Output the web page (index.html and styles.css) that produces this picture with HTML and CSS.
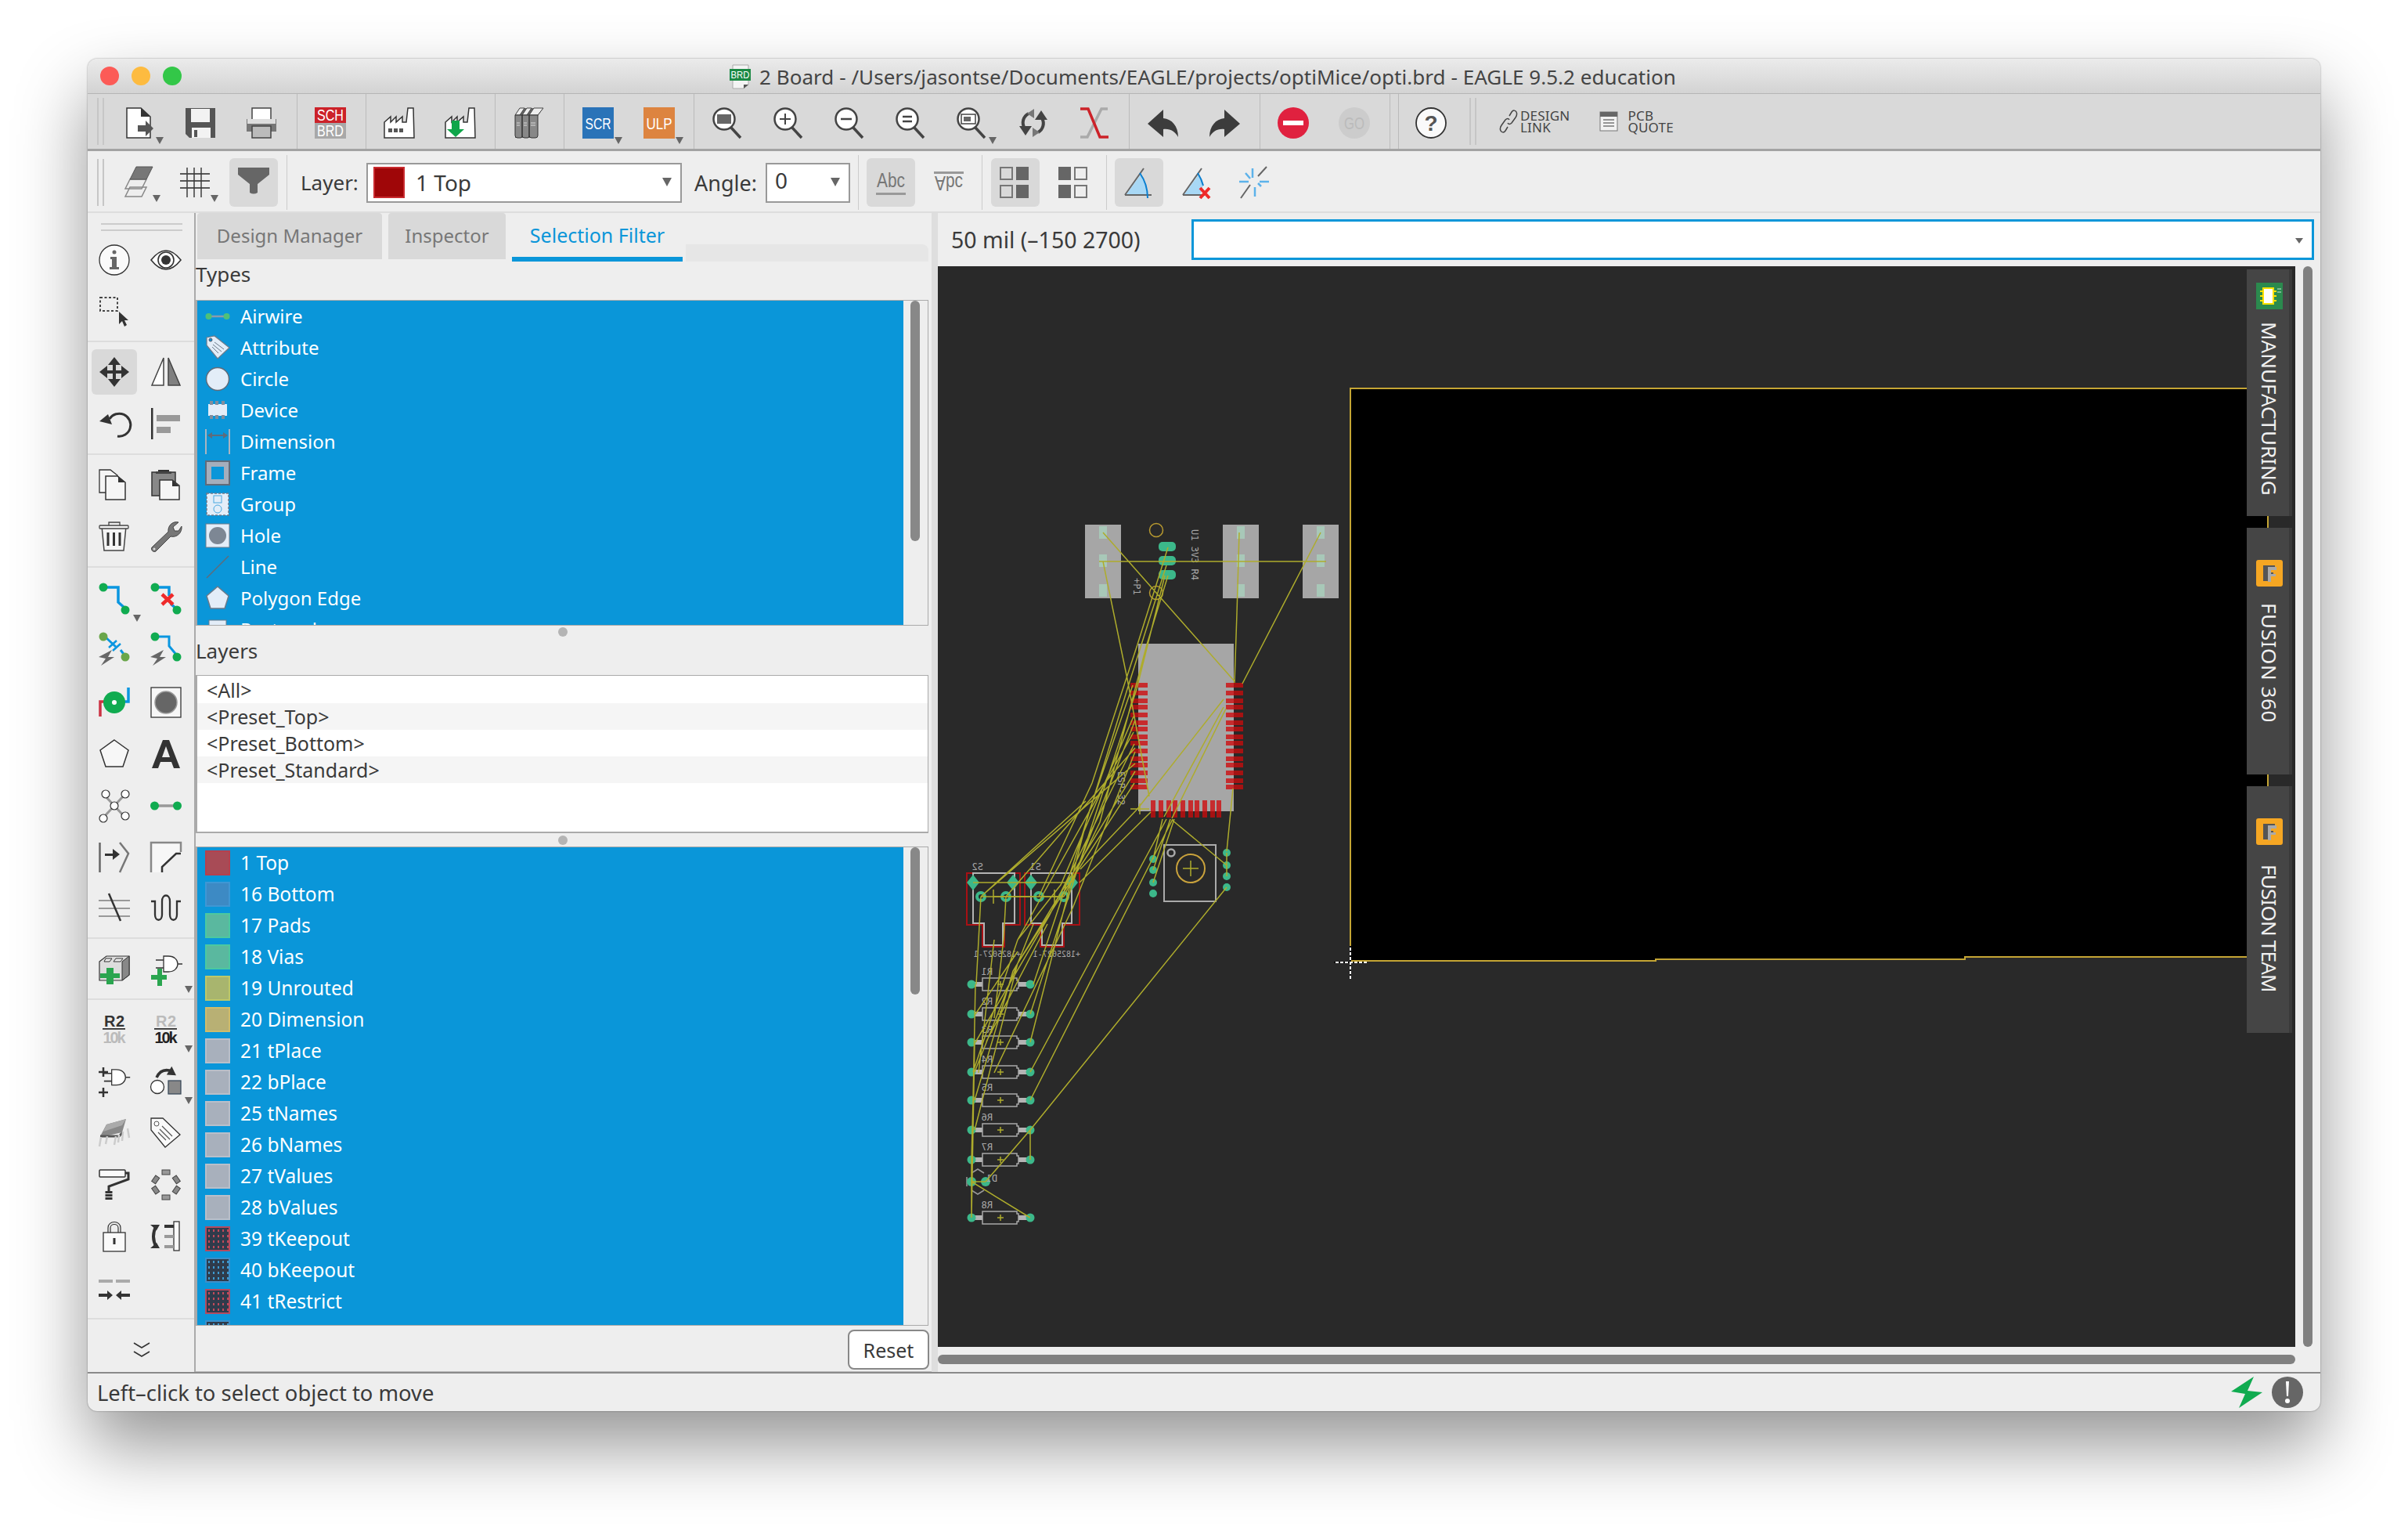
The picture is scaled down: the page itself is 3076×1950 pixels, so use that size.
FILE: index.html
```html
<!DOCTYPE html>
<html>
<head>
<meta charset="utf-8">
<title>2 Board - EAGLE</title>
<link rel="stylesheet" href="styles.css">
</head>
<body>
<svg class="defs" width="0" height="0">
	<defs>
		<g id="zoomlens">
			<circle cx="15" cy="15" r="13.5" fill="#fff" stroke="#444" stroke-width="2.5"/>
			<path d="M24 26L36 39" stroke="#444" stroke-width="3.5" fill="none"/>
		</g>
		<g id="factory">
			<path d="M1 39V19L9 12V19L16 12V19L24 12V19H29L31 1H38L39 39Z" fill="#fff" stroke="#333" stroke-width="1.5"/>
		</g>
		<g id="layoutgrid">
			<rect x="1" y="1" width="15" height="15" fill="none" stroke="#777" stroke-width="2"/>
			<rect x="1" y="24" width="15" height="15" fill="none" stroke="#777" stroke-width="2"/>
			<rect x="21" y="0" width="16" height="17" fill="#666"/>
			<rect x="21" y="23" width="16" height="17" fill="#666"/>
		</g>
		<g id="gate">
			<path d="M16 4H22C30 4 34 9 34 14S30 24 22 24H16Z" fill="#fff" stroke="#333" stroke-width="1.3"/>
			<path d="M6 9H16M6 19H16M34 14H40" stroke="#333" stroke-width="1.6"/>
		</g>
		<g id="res">
			<path d="M1241 0H1255M1301 0H1316" stroke="#b4b4b4" stroke-width="6"/>
			<circle cx="1241" cy="0" r="5.5" fill="#3cb88a"/>
			<circle cx="1316" cy="0" r="5.5" fill="#3cb88a"/>
			<path d="M1255 -8H1299V-5H1301V5H1299V8H1255Z" fill="none" stroke="#a8a8a8" stroke-width="1.5"/>
			<path d="M1274 0H1282M1278 -4V4" stroke="#aeac2c" stroke-width="1.5"/>
		</g>
		<g id="modpads">
			<path d="M1444 872h22v6h-22zM1444 882h22v6h-22zM1444 892h22v6h-22zM1444 900h22v6h-22zM1444 910h22v6h-22zM1444 920h22v6h-22zM1444 928h22v6h-22zM1444 938h22v6h-22zM1444 946h22v6h-22zM1444 956h22v6h-22zM1444 966h22v6h-22zM1444 974h22v6h-22zM1444 984h22v6h-22zM1444 994h22v6h-22zM1444 1002h22v6h-22z"/>
			<path d="M1566 872h22v6h-22zM1566 882h22v6h-22zM1566 892h22v6h-22zM1566 900h22v6h-22zM1566 910h22v6h-22zM1566 920h22v6h-22zM1566 928h22v6h-22zM1566 938h22v6h-22zM1566 946h22v6h-22zM1566 956h22v6h-22zM1566 966h22v6h-22zM1566 974h22v6h-22zM1566 984h22v6h-22zM1566 994h22v6h-22zM1566 1002h22v6h-22z"/>
			<path d="M1470 1022h6v22h-6zM1480 1022h6v22h-6zM1490 1022h6v22h-6zM1498 1022h6v22h-6zM1508 1022h6v22h-6zM1518 1022h6v22h-6zM1526 1022h6v22h-6zM1536 1022h6v22h-6zM1546 1022h6v22h-6zM1554 1022h6v22h-6z"/>
		</g>
	</defs>
</svg>

<div class="window">
	<div class="titlebar">
		<span class="light red"></span><span class="light yellow"></span><span class="light green"></span>
		<div class="title">
			<svg class="titleicon" width="28" height="32" viewBox="0 0 28 32">
				<path d="M4 1H24V26L18 31H4Z" fill="#f4f4f4" stroke="#aaa"/>
				<rect x="0" y="6" width="27" height="15" fill="#1c8a45"/>
				<text x="13.5" y="18" class="svgtxt" font-size="13" fill="#fff" text-anchor="middle" textLength="24" lengthAdjust="spacingAndGlyphs">BRD</text>
				<path d="M18 31V26H24Z" fill="#555"/>
			</svg>
			<span>2 Board - /Users/jasontse/Documents/EAGLE/projects/optiMice/opti.brd - EAGLE 9.5.2 education</span>
		</div>
	</div>

	<div class="toolbar top">
		<div class="grip"></div>
		<div class="group g1">
			<div class="tool drop"><svg class="ic" viewBox="0 0 40 40"><path d="M4 1H22L34 12V39H4Z" fill="#fff" stroke="#333" stroke-width="1.5"/><path d="M22 1L34 12H22Z" fill="#333"/><path d="M18 23H28V17L38 27 28 37V31H18Z" fill="#555"/></svg></div>
			<div class="tool"><svg class="ic" viewBox="0 0 40 40"><path d="M1 1H39V39H6L1 34Z" fill="#555"/><rect x="8" y="2" width="24" height="17" fill="#f2f2f2"/><rect x="9" y="26" width="24" height="13" fill="#f2f2f2"/><rect x="12" y="29" width="4" height="9" fill="#555"/></svg></div>
			<div class="tool"><svg class="ic" viewBox="0 0 40 40"><rect x="8" y="1" width="24" height="17" fill="#fff" stroke="#444" stroke-width="1.5"/><path d="M1 15H39V31H1Z" fill="#777"/><rect x="2" y="15" width="36" height="6" fill="#ddd"/><rect x="8" y="24" width="24" height="15" fill="#bbb" stroke="#444" stroke-width="1.5"/></svg></div>
		</div>
		<div class="group g2">
			<div class="tool"><svg class="ic" viewBox="0 0 40 40"><rect width="40" height="20" fill="#cc2229"/><rect y="20" width="40" height="20" fill="#a8a8a8"/><text x="20" y="17" class="svgtxt" font-size="20" fill="#fff" text-anchor="middle" textLength="34" lengthAdjust="spacingAndGlyphs">SCH</text><text x="20" y="37" class="svgtxt" font-size="20" fill="#fff" text-anchor="middle" textLength="34" lengthAdjust="spacingAndGlyphs">BRD</text></svg></div>
		</div>
		<div class="group g3">
			<div class="tool"><svg class="ic" viewBox="0 0 40 40"><use href="#factory"/><rect x="6" y="27" width="5" height="5" fill="#555"/><rect x="13" y="27" width="5" height="5" fill="#555"/><rect x="20" y="27" width="5" height="5" fill="#555"/></svg></div>
			<div class="tool"><svg class="ic" viewBox="0 0 40 40"><use href="#factory"/><path d="M9 18H19V29H25L14 39 3 29H9Z" fill="#0fa64a" transform="translate(0 -1)"/></svg></div>
		</div>
		<div class="group g4">
			<div class="tool"><svg class="ic" viewBox="0 0 40 40"><path d="M2 10L8 1H38L31 11V35L28 39H2Z" fill="#666"/><path d="M8 1H14L8 10H2ZM17 1H23L17 10H11ZM26 1H38L31 10H20Z" fill="#eee" stroke="#444"/><path d="M2 10V36Q2 39 5 39H9Q11 39 11 36V10ZM11 10V36Q11 39 14 39H18Q20 39 20 36V10ZM20 10V36Q20 39 23 39H28Q31 39 31 36V10Z" fill="#888" stroke="#333"/><path d="M4 20H8M13 20H17M22 20H28M4 23H8M13 23H17M22 23H28" stroke="#ddd"/></svg></div>
		</div>
		<div class="group g5">
			<div class="tool drop"><svg class="ic" viewBox="0 0 40 40"><rect width="40" height="40" fill="#2a73b8"/><text x="20" y="28" class="svgtxt" font-size="20" fill="#fff" text-anchor="middle" textLength="33" lengthAdjust="spacingAndGlyphs">SCR</text></svg></div>
			<div class="tool drop"><svg class="ic" viewBox="0 0 40 40"><rect width="40" height="40" fill="#dd8440"/><text x="20" y="28" class="svgtxt" font-size="20" fill="#fff" text-anchor="middle" textLength="33" lengthAdjust="spacingAndGlyphs">ULP</text></svg></div>
		</div>
		<div class="group g6">
			<div class="tool"><svg class="ic" viewBox="0 0 40 40"><use href="#zoomlens"/><rect x="6" y="9" width="18" height="12" fill="#666"/></svg></div>
			<div class="tool"><svg class="ic" viewBox="0 0 40 40"><use href="#zoomlens"/><path d="M15 8V22M8 15H22" stroke="#444" stroke-width="2"/></svg></div>
			<div class="tool"><svg class="ic" viewBox="0 0 40 40"><use href="#zoomlens"/><path d="M8 15H22" stroke="#444" stroke-width="2.5"/></svg></div>
			<div class="tool"><svg class="ic" viewBox="0 0 40 40"><use href="#zoomlens"/><path d="M9 12H21M9 18H21" stroke="#444" stroke-width="2.5"/></svg></div>
			<div class="tool drop"><svg class="ic" viewBox="0 0 40 40"><use href="#zoomlens"/><rect x="6" y="9" width="18" height="12" fill="#fff" stroke="#444" stroke-width="1.5"/><rect x="9" y="12" width="9" height="6" fill="#666"/></svg></div>
			<div class="tool"><svg class="ic" viewBox="0 0 40 40"><path d="M9 27A13 13 0 0 1 14 8" fill="none" stroke="#444" stroke-width="4"/><path d="M31 14A13 13 0 0 1 26 32" fill="none" stroke="#444" stroke-width="4"/><path d="M2 24H18L10 36ZM22 16H38L30 4Z" fill="#444"/><path d="M12 8L21 2V14ZM28 32L19 26V38Z" fill="#777"/></svg></div>
			<div class="tool"><svg class="ic" viewBox="0 0 40 40"><path d="M37 2H29L11 38H2" fill="none" stroke="#aaa" stroke-width="3.5"/><path d="M2 2H12L27 38H38" fill="none" stroke="#cc2229" stroke-width="3.5"/></svg></div>
		</div>
		<div class="group g7">
			<div class="tool"><svg class="ic" viewBox="0 0 40 40"><path d="M20 3L0 21 20 38V28C29 27 35 31 39 38 39 24 31 15 20 14Z" fill="#3c3c3c"/></svg></div>
			<div class="tool"><svg class="ic" viewBox="0 0 40 40"><path d="M20 3L40 21 20 38V28C11 27 5 31 1 38 1 24 9 15 20 14Z" fill="#3c3c3c"/></svg></div>
		</div>
		<div class="group g8">
			<div class="tool"><svg class="ic" viewBox="0 0 40 40"><circle cx="20" cy="20" r="20" fill="#e0213f"/><rect x="7" y="17" width="26" height="6" fill="#fff"/></svg></div>
			<div class="tool"><svg class="ic" viewBox="0 0 40 40"><circle cx="20" cy="20" r="20" fill="#ccc"/><text x="20" y="28" class="svgtxt" font-size="22" fill="#bbb" text-anchor="middle" textLength="26" lengthAdjust="spacingAndGlyphs">GO</text></svg></div>
		</div>
		<div class="group g9"></div>
		<div class="tool help"><svg class="ic" viewBox="0 0 40 40"><circle cx="20" cy="20" r="19" fill="#fafafa" stroke="#333" stroke-width="1.8"/><text x="20" y="30" class="svgtxt" font-size="28" font-weight="700" fill="#555" text-anchor="middle">?</text></svg></div>
		<div class="grip g-right"></div>
		<div class="linkitem li-design">
			<svg class="linkicon" width="24" height="32" viewBox="0 0 24 32"><path d="M13 9L16 4C18 1 21 2 22 4S23 8 21 11L16 18C14 20 12 20 11 18M11 23L8 28C6 31 3 30 2 28S1 24 3 21L8 14C10 12 12 12 13 14" fill="none" stroke="#444" stroke-width="1.5"/></svg>
			<span>DESIGN<br>LINK</span>
		</div>
		<div class="linkitem li-pcb">
			<svg class="linkicon" width="24" height="26" viewBox="0 0 24 26"><rect x="1" y="1" width="22" height="24" fill="#f2f2f2" stroke="#777"/><rect x="1" y="1" width="22" height="6" fill="#666"/><path d="M5 11H19M5 15H19M5 19H19" stroke="#777" stroke-width="1.5"/></svg>
			<span>PCB<br>QUOTE</span>
		</div>
	</div>

	<div class="toolbar second">
		<div class="grip"></div>
		<div class="tool2 drop"><svg class="ic" viewBox="0 0 40 40"><path d="M10 24H31L37 12H16Z" fill="none" stroke="#888" stroke-width="1.5" transform="translate(-6 14)"/><path d="M10 16H31L37 4H16Z" fill="none" stroke="#888" stroke-width="1.5" transform="translate(-6 12)"/><path d="M10 16H31L39 0H18Z" fill="#777" stroke="#555"/></svg></div>
		<div class="tool2 drop"><svg class="ic" viewBox="0 0 40 40"><path d="M9 1V39M18 1V39M27 1V39M0 9H38M0 18H38M0 27H38" stroke="#222" stroke-width="1.3"/><path d="M0 9H38M0 18H38M0 27H38M9 1V39" stroke="#666" stroke-width=".5"/></svg></div>
		<div class="tool2"><div class="sel"><svg class="ic" viewBox="0 0 40 40"><path d="M0 1H40V10L25 22V33Q20 36 15 33V22L0 10Z" fill="#666"/></svg></div></div>
		<div class="sep2"></div>
		<label class="lbl lbl-layer">Layer:</label>
		<div class="select layer"><span class="swatch-top"></span><span class="val">1 Top</span><i class="arrow"></i></div>
		<label class="lbl lbl-angle">Angle:</label>
		<div class="select angle"><span class="val">0</span><i class="arrow"></i></div>
		<div class="sep2 s-b"></div>
		<div class="tool2"><div class="sel"><svg class="ic" viewBox="0 0 40 40"><text x="20" y="26" class="svgtxt" font-size="25" fill="#777" text-anchor="middle" textLength="36" lengthAdjust="spacingAndGlyphs">Abc</text><rect x="1" y="33" width="38" height="3" fill="#999"/></svg></div></div>
		<div class="tool2"><svg class="ic" viewBox="0 0 40 40"><rect x="1" y="6" width="38" height="3" fill="#999"/><text transform="translate(20 12) scale(1 -1)" x="0" y="0" class="svgtxt" font-size="25" fill="#777" text-anchor="middle" textLength="36" lengthAdjust="spacingAndGlyphs">Abc</text></svg></div>
		<div class="sep2 s-c"></div>
		<div class="tool2"><div class="sel"><svg class="ic" viewBox="0 0 40 40"><use href="#layoutgrid"/></svg></div></div>
		<div class="tool2"><svg class="ic" viewBox="0 0 40 40"><g transform="matrix(-1 0 0 1 38 0)"><use href="#layoutgrid"/></g></svg></div>
		<div class="sep2 s-d"></div>
		<div class="tool2"><div class="sel"><svg class="ic" viewBox="0 0 40 40"><path d="M2 36L26 2M2 36H36" fill="none" stroke="#666" stroke-width="2"/><path d="M4 35L22 10Q30 22 30 35Z" fill="#a8d8f5"/><path d="M21 8Q31 22 31 40" fill="none" stroke="#0a7fd0" stroke-width="2"/></svg></div></div>
		<div class="tool2"><svg class="ic" viewBox="0 0 40 40"><path d="M2 36L26 2M2 36H30" fill="none" stroke="#666" stroke-width="2"/><path d="M4 35L22 10L28 24L24 35Z" fill="#a8d8f5"/><path d="M21 8Q26 16 28 24" fill="none" stroke="#0a7fd0" stroke-width="2"/><path d="M24 27L36 40M36 27L24 40" stroke="#ee2a2a" stroke-width="4"/></svg></div>
		<div class="tool2"><svg class="ic" viewBox="0 0 40 40"><path d="M2 40L14 23M24 12L35 0" stroke="#666" stroke-width="2"/><path d="M17 2V14M20 26V38M0 19H12M26 19H38M8 8L14 15M28 25L24 21" stroke="#5cb2ea" stroke-width="2.5"/></svg></div>
	</div>

	<div class="main">
		<div class="toolbox">
			<div class="tgroup first">
				<div class="tgrip"></div>
				<div class="tgrid">
					<div class="tcell"><svg class="ic" viewBox="0 0 40 40"><circle cx="20" cy="20" r="19" fill="#fafafa" stroke="#333" stroke-width="1.3"/><circle cx="20" cy="10" r="2.5" fill="#666"/><path d="M15 16H23V29H26V32H14V29H17V19H15Z" fill="#666"/></svg></div>
					<div class="tcell"><svg class="ic" viewBox="0 0 40 40"><path d="M1 20Q20 -4 39 20Q20 44 1 20Z" fill="#fff" stroke="#333" stroke-width="1.6"/><circle cx="20" cy="20" r="10" fill="#fff" stroke="#333" stroke-width="1.6"/><circle cx="20" cy="20" r="6" fill="#333"/></svg></div>
					<div class="tcell"><svg class="ic" viewBox="0 0 40 40"><rect x="2" y="2" width="22" height="17" fill="none" stroke="#444" stroke-width="2" stroke-dasharray="3 2.5"/><path d="M26 20V36L30 32 33 39 36 37 33 31H38Z" fill="#333"/></svg></div>
					<div class="tcell empty"></div>
				</div>
			</div>
			<div class="tgroup">
				<div class="tgrid">
					<div class="tcell active"><svg class="ic" viewBox="0 0 40 40"><path d="M20 1L28 11H22V18H29V12L39 20 29 28V22H22V29H28L20 39 12 29H18V22H11V28L1 20 11 12V18H18V11H12Z" fill="#333"/></svg></div>
					<div class="tcell"><svg class="ic" viewBox="0 0 40 40"><path d="M17 2V37H2Z" fill="#fff" stroke="#444" stroke-width="1.5"/><path d="M23 2V37H38Z" fill="#808080" stroke="#444" stroke-width="1.5"/></svg></div>
					<div class="tcell"><svg class="ic" viewBox="0 0 40 40"><path d="M14 14A14.5 14.5 0 1 1 24 36" fill="none" stroke="#333" stroke-width="3"/><path d="M1 17L12 8 17 21Z" fill="#333"/></svg></div>
					<div class="tcell"><svg class="ic" viewBox="0 0 40 40"><rect x="1" y="0" width="2.5" height="40" fill="#333"/><rect x="8" y="9" width="30" height="8" fill="#999"/><rect x="8" y="24" width="18" height="8" fill="#999"/></svg></div>
				</div>
			</div>
			<div class="tgroup">
				<div class="tgrid">
					<div class="tcell"><svg class="ic" viewBox="0 0 40 40"><path d="M1 1H15L24 8V30H1Z" fill="#f5f5f5" stroke="#333" stroke-width="1.3"/><path d="M9 9H24L34 17V39H9Z" fill="#f5f5f5" stroke="#333" stroke-width="1.5"/><path d="M25 9L34 17H25Z" fill="#333"/></svg></div>
					<div class="tcell"><svg class="ic" viewBox="0 0 40 40"><path d="M2 4H32V34H2Z" fill="#888" stroke="#333" stroke-width="1.5"/><path d="M10 5H24V1H10Z" fill="#333"/><rect x="7" y="3" width="20" height="3" fill="#444"/><path d="M12 14H28L37 21V39H12Z" fill="#f5f5f5" stroke="#333" stroke-width="1.5"/><path d="M28 14L37 22H28Z" fill="#333"/></svg></div>
					<div class="tcell"><svg class="ic" viewBox="0 0 40 40"><path d="M4 7L7 38H32L35 7" fill="#f5f5f5" stroke="#444" stroke-width="1.5"/><rect x="1" y="6" width="37" height="4" rx="1" fill="#f5f5f5" stroke="#444" stroke-width="1.3"/><path d="M13 6V2H27V6" fill="none" stroke="#444" stroke-width="1.3"/><path d="M12 15V32M19.5 15V32M27 15V32" stroke="#333" stroke-width="3"/></svg></div>
					<div class="tcell"><svg class="ic" viewBox="0 0 40 40"><path d="M2 34L23 14C22 6 29 0 36 2L29 8 31 13 36 13 40 7C41 15 34 22 26 20L7 39C4 41 0 37 2 34Z" fill="#777" stroke="#444"/><circle cx="5" cy="36" r="1.5" fill="#ddd"/></svg></div>
				</div>
			</div>
			<div class="tgroup g-route">
				<div class="tgrid">
					<div class="tcell drop"><svg class="ic" viewBox="0 0 40 40"><path d="M5 5H25V24L34 32" fill="none" stroke="#0a96e0" stroke-width="3.5"/><circle cx="6" cy="5" r="5.5" fill="#10ab50"/><circle cx="34" cy="34" r="5.5" fill="#10ab50"/></svg></div>
					<div class="tcell"><svg class="ic" viewBox="0 0 40 40"><path d="M5 5H24V16M26 26L34 33" fill="none" stroke="#0a96e0" stroke-width="3.5"/><circle cx="6" cy="5" r="5.5" fill="#10ab50"/><circle cx="34" cy="34" r="5.5" fill="#10ab50"/><path d="M15 14L29 27M29 14L15 27" stroke="#ee2a2a" stroke-width="4.5"/></svg></div>
					<div class="tcell"><svg class="ic" viewBox="0 0 40 40"><path d="M8 2L22 15" stroke="#0a96e0" stroke-width="3"/><path d="M13 16L23 7M18 20L28 11" stroke="#0a96e0" stroke-width="2.5"/><path d="M28 19L34 27" stroke="#0a96e0" stroke-width="3"/><circle cx="6" cy="2" r="5.5" fill="#6aa64a"/><circle cx="34" cy="28" r="5.5" fill="#6aa64a"/><path d="M0 28L17 19 12 28 20 28 3 39 9 30Z" fill="#666"/></svg></div>
					<div class="tcell"><svg class="ic" viewBox="0 0 40 40"><path d="M6 2H24V14L34 26" fill="none" stroke="#0a96e0" stroke-width="3"/><circle cx="6" cy="2" r="5.5" fill="#10ab50"/><circle cx="34" cy="28" r="5.5" fill="#10ab50"/><path d="M0 28L17 19 12 28 20 28 3 39 9 30Z" fill="#666"/></svg></div>
					<div class="tcell"><svg class="ic" viewBox="0 0 40 40"><path d="M2 38V19H12" fill="none" stroke="#cc3344" stroke-width="3.5"/><path d="M28 19H38V1" fill="none" stroke="#0a96e0" stroke-width="3.5"/><circle cx="20" cy="20" r="14" fill="#10ab50"/><circle cx="20" cy="20" r="3" fill="#fff"/></svg></div>
					<div class="tcell"><svg class="ic" viewBox="0 0 40 40"><rect x="1" y="1" width="38" height="38" fill="#f7f7f7" stroke="#333" stroke-width="1.3"/><circle cx="20" cy="20" r="14" fill="#666" stroke="#999" stroke-width="1.5"/></svg></div>
					<div class="tcell"><svg class="ic" viewBox="0 0 40 40"><path d="M20 2L38 15 31 36H9L2 15Z" fill="#f7f7f7" stroke="#333" stroke-width="1.5"/></svg></div>
					<div class="tcell"><svg class="ic" viewBox="0 0 40 40"><path d="M2 38L16 2H24L38 38H30L27 30H13L10 38ZM15 24H25L20 10Z" fill="#333" fill-rule="evenodd"/></svg></div>
					<div class="tcell"><svg class="ic" viewBox="0 0 40 40"><path d="M6 5L34 35M34 5L6 35" stroke="#999" stroke-width="3"/><circle cx="9" cy="5" r="5" fill="#fff" stroke="#333" stroke-width="1.2"/><circle cx="34" cy="5" r="5" fill="#fff" stroke="#333" stroke-width="1.2"/><circle cx="20" cy="20" r="5" fill="#fff" stroke="#333" stroke-width="1.2"/><circle cx="6" cy="36" r="5" fill="#fff" stroke="#333" stroke-width="1.2"/><circle cx="34" cy="33" r="5" fill="#fff" stroke="#333" stroke-width="1.2"/></svg></div>
					<div class="tcell"><svg class="ic" viewBox="0 0 40 40"><path d="M6 20H34" stroke="#999" stroke-width="3.5"/><circle cx="5.5" cy="20" r="5.5" fill="#10ab50"/><circle cx="34.5" cy="20" r="5.5" fill="#10ab50"/></svg></div>
					<div class="tcell"><svg class="ic" viewBox="0 0 40 40"><path d="M1.5 1V39" stroke="#666" stroke-width="2.5"/><path d="M27 1L38 15 27 39" fill="none" stroke="#777" stroke-width="2.5"/><path d="M8 15H18V9L27 16 18 23V18H8Z" fill="#333"/></svg></div>
					<div class="tcell"><svg class="ic" viewBox="0 0 40 40"><path d="M1 39H15V32L33 15H39V1H1Z" fill="#f7f7f7"/><path d="M1 39V1H39V13" fill="none" stroke="#888" stroke-width="2.5"/><path d="M15 39V32L33 15H39" fill="none" stroke="#333" stroke-width="2.5"/></svg></div>
					<div class="tcell"><svg class="ic" viewBox="0 0 40 40"><path d="M0 9H40M0 19H40M0 29H40" stroke="#999" stroke-width="2"/><path d="M13 0L28 35" stroke="#333" stroke-width="2.5"/></svg></div>
					<div class="tcell"><svg class="ic" viewBox="0 0 40 40"><path d="M1 10H6V27C6 36 15 36 15 27V10C15 0 25 0 25 10V27C25 36 34 36 34 27V10H39" fill="none" stroke="#333" stroke-width="2.3"/></svg></div>
				</div>
			</div>
			<div class="tgroup g-add">
				<div class="tgrid">
					<div class="tcell"><svg class="ic" viewBox="0 0 40 40"><path d="M1 9L10 2H39V26L30 33H1Z" fill="#ddd" stroke="#333" stroke-width="1.2"/><path d="M30 9V33L39 26V2Z" fill="#888" stroke="#333" stroke-width="1"/><path d="M9 5H17L14 9H7ZM22 5H31L28 9H19Z" fill="#eee" stroke="#333"/><path d="M10 17V24H2V30H10V38H19V30H27V24H19V17Z" fill="#2aa54f"/></svg></div>
					<div class="tcell drop"><svg class="ic" viewBox="0 0 40 40"><use href="#gate" transform="translate(1 -2)"/><path d="M9 19V27H1V33H9V41H15V33H21V27H15V19Z" fill="#2aa54f" transform="translate(0 -1)"/></svg></div>
				</div>
			</div>
			<div class="tgroup">
				<div class="tgrid">
					<div class="tcell"><svg class="ic r2" viewBox="0 0 40 40"><text x="20" y="16" class="svgbold" font-size="20" fill="#333" text-anchor="middle" textLength="26">R2</text><rect x="5" y="18" width="29" height="1.8" fill="#333"/><text x="20" y="37" class="svgbold" font-size="20" fill="#bbb" text-anchor="middle" textLength="29">10k</text></svg></div>
					<div class="tcell drop"><svg class="ic r2" viewBox="0 0 40 40"><text x="20" y="16" class="svgbold" font-size="20" fill="#bbb" text-anchor="middle" textLength="26">R2</text><rect x="5" y="18" width="29" height="1.8" fill="#333"/><text x="20" y="37" class="svgbold" font-size="20" fill="#222" text-anchor="middle" textLength="29">10k</text></svg></div>
					<div class="tcell"><svg class="ic" viewBox="0 0 40 40"><use href="#gate" transform="translate(1 1) scale(.98)" /><path d="M6 2V14M0 8H12M6 28V40M0 34H12" stroke="#333" stroke-width="2.5"/></svg></div>
					<div class="tcell drop"><svg class="ic" viewBox="0 0 40 40"><circle cx="9" cy="27" r="8.5" fill="#fff" stroke="#333" stroke-width="1.3"/><rect x="23" y="19" width="16" height="17" fill="#888" stroke="#345" stroke-width="1.2"/><path d="M8 15Q14 2 28 7" fill="none" stroke="#333" stroke-width="3.5"/><path d="M26 1L34 11 22 13Z" fill="#333" transform="rotate(12 28 7)"/></svg></div>
					<div class="tcell"><svg class="ic" viewBox="0 0 40 40"><path d="M2 24L10 9 35 2 30 19 8 24Z" fill="#888"/><path d="M10 9L35 2 30 10 6 18Z" fill="#aaa"/><path d="M2 24H26L31 19" fill="none" stroke="#555" stroke-width="3"/><path d="M3 25L1 37M11 24L9 34M22 24L20 35M26 22L25 32M31 18L30 30M37 14L39 26" stroke="#ccc" stroke-width="2.5"/></svg></div>
					<div class="tcell"><svg class="ic" viewBox="0 0 40 40"><path d="M1 1H16L38 22 19 38 1 16Z" fill="#fafafa" stroke="#333" stroke-width="1.3"/><circle cx="8" cy="8" r="3" fill="#fff" stroke="#555"/><path d="M15 11L28 24M12 15L25 28M10 19L20 29" stroke="#555" stroke-width="1.2"/></svg></div>
					<div class="tcell"><svg class="ic" viewBox="0 0 40 40"><rect x="1" y="1" width="33" height="9" rx="1" fill="#fafafa" stroke="#333" stroke-width="1.5"/><path d="M34 5H38V13L13 22V28" fill="none" stroke="#333" stroke-width="3"/><path d="M13 28V39" stroke="#333" stroke-width="9" stroke-dasharray="3 1"/></svg></div>
					<div class="tcell"><svg class="ic" viewBox="0 0 40 40"><rect x="15" y="1" width="10" height="6" fill="#999" stroke="#444"/><rect x="15" y="33" width="10" height="6" fill="#999" stroke="#444"/><g fill="#888" stroke="#444"><rect x="4" y="9" width="6" height="9" transform="rotate(35 7 13)"/><rect x="30" y="9" width="6" height="9" transform="rotate(-35 33 13)"/><rect x="4" y="22" width="6" height="9" transform="rotate(-35 7 27)"/><rect x="30" y="22" width="6" height="9" transform="rotate(35 33 27)"/></g></svg></div>
					<div class="tcell"><svg class="ic" viewBox="0 0 40 40"><rect x="6" y="15" width="28" height="24" fill="#fafafa" stroke="#333" stroke-width="1.3"/><path d="M12 15V9C12 -1 28 -1 28 9V15M15 15V9C15 3 25 3 25 9V15" fill="none" stroke="#333" stroke-width="1.2"/><rect x="18.5" y="22" width="3" height="8" fill="#333"/></svg></div>
					<div class="tcell"><svg class="ic" viewBox="0 0 40 40"><rect x="30" y="1" width="7" height="37" fill="#fafafa" stroke="#333" stroke-width="1.3"/><rect x="18" y="5" width="12" height="4" fill="#333"/><rect x="18" y="18" width="12" height="4" fill="#999"/><rect x="18" y="31" width="12" height="4" fill="#999"/><path d="M8 6Q0 20 8 34" fill="none" stroke="#333" stroke-width="4"/><path d="M0 5H12L8 12ZM0 35H12L8 28Z" fill="#333"/></svg></div>
					<div class="tcell"><svg class="ic" viewBox="0 0 40 40"><rect x="0" y="9" width="18" height="4" fill="#aaa"/><rect x="22" y="9" width="18" height="4" fill="#aaa"/><path d="M0 27H11V23L18 29 11 35V31H0ZM40 27H29V23L22 29 29 35V31H40Z" fill="#333"/></svg></div>
				</div>
			</div>
			<div class="chev"><svg width="22" height="20" viewBox="0 0 22 20"><path d="M1 1L11 7 21 1M1 12L11 18 21 12" fill="none" stroke="#333" stroke-width="1.6"/></svg></div>
		</div>

		<div class="panel">
			<div class="tabs">
				<div class="tab t-dm">Design Manager</div>
				<div class="tab t-in">Inspector</div>
				<div class="tab current">Selection Filter</div>
				<div class="tabfill"></div>
			</div>
			<div class="heading h-types">Types</div>
			<div class="list types">
				<div class="rows">
					<div class="row"><svg class="ti" viewBox="0 0 32 32"><path d="M4 16H28" stroke="#8c9bab" stroke-width="2.5"/><circle cx="4.5" cy="16" r="4" fill="#4fc078"/><circle cx="27.5" cy="16" r="4" fill="#4fc078"/></svg>Airwire</div>
					<div class="row"><svg class="ti" viewBox="0 0 32 32"><path d="M2 3L12 1 31 16 16 30 2 13Z" fill="#e3edf8" stroke="#6c7a8a" stroke-width="1.2"/><circle cx="7" cy="6" r="2" fill="#0a96d9" stroke="#556"/><path d="M12 9L24 18M10 12L21 21M9 15L17 23" stroke="#6c7a8a"/></svg>Attribute</div>
					<div class="row"><svg class="ti" viewBox="0 0 32 32"><circle cx="16" cy="16" r="14.5" fill="#e3edf8" stroke="#5f6b7a" stroke-width="1.5"/></svg>Circle</div>
					<div class="row"><svg class="ti" viewBox="0 0 32 32"><rect x="4" y="8" width="24" height="15" fill="#e3edf8"/><path d="M8 4V28M15 4V28M23 4V28" stroke="#828d9d" stroke-width="4" stroke-dasharray="5 13"/></svg>Device</div>
					<div class="row"><svg class="ti" viewBox="0 0 32 32"><path d="M1 0V32M31 0V32" stroke="#aab4c0" stroke-width="2"/><path d="M4 8H28" stroke="#5f6b7a" stroke-width="2"/><path d="M3 8L9 4V12ZM29 8L23 4V12Z" fill="#5f6b7a"/></svg>Dimension</div>
					<div class="row"><svg class="ti" viewBox="0 0 32 32"><rect x="1" y="1" width="30" height="30" fill="#a4aebc" stroke="#5f6b7a" stroke-width="2"/><rect x="8" y="8" width="16" height="16" fill="#0a96d9"/></svg>Frame</div>
					<div class="row"><svg class="ti" viewBox="0 0 32 32"><rect x="2" y="2" width="28" height="28" fill="#e3edf8" stroke="#6c7a8a" stroke-width="1.5" stroke-dasharray="3 2"/><rect x="11" y="5" width="10" height="9" fill="none" stroke="#4aa8e0"/><circle cx="16" cy="22" r="5" fill="none" stroke="#4aa8e0"/></svg>Group</div>
					<div class="row"><svg class="ti" viewBox="0 0 32 32"><rect x="1" y="1" width="30" height="30" fill="#e3edf8" stroke="#6c7a8a"/><circle cx="16" cy="16" r="11" fill="#7d8794"/></svg>Hole</div>
					<div class="row"><svg class="ti" viewBox="0 0 32 32"><path d="M2 30L30 2" stroke="#5f6b7a" stroke-width="1.5"/></svg>Line</div>
					<div class="row"><svg class="ti" viewBox="0 0 32 32"><path d="M16 1L30 13 25 29H7L2 13Z" fill="#e3edf8" stroke="#6c7a8a" stroke-width="1.5"/></svg>Polygon Edge</div>
					<div class="row"><svg class="ti" viewBox="0 0 32 32"><rect x="5" y="4" width="22" height="24" fill="#e3edf8" stroke="#6c7a8a"/></svg>Rectangle</div>
				</div>
				<div class="gutter"><div class="thumb th-types"></div></div>
			</div>
			<div class="handle"><i></i></div>
			<div class="heading h-layers">Layers</div>
			<div class="presets">
				<div>&lt;All&gt;</div>
				<div>&lt;Preset_Top&gt;</div>
				<div>&lt;Preset_Bottom&gt;</div>
				<div>&lt;Preset_Standard&gt;</div>
			</div>
			<div class="handle h2"><i></i></div>
			<div class="list layers">
				<div class="rows">
					<div class="row"><span class="sw l-top"></span>1 Top</div>
					<div class="row"><span class="sw l-bot"></span>16 Bottom</div>
					<div class="row"><span class="sw l-pad"></span>17 Pads</div>
					<div class="row"><span class="sw l-pad"></span>18 Vias</div>
					<div class="row"><span class="sw l-unr"></span>19 Unrouted</div>
					<div class="row"><span class="sw l-dim"></span>20 Dimension</div>
					<div class="row"><span class="sw l-gry"></span>21 tPlace</div>
					<div class="row"><span class="sw l-gry"></span>22 bPlace</div>
					<div class="row"><span class="sw l-gry"></span>25 tNames</div>
					<div class="row"><span class="sw l-gry"></span>26 bNames</div>
					<div class="row"><span class="sw l-gry"></span>27 tValues</div>
					<div class="row"><span class="sw l-gry"></span>28 bValues</div>
					<div class="row"><span class="sw l-tk"></span>39 tKeepout</div>
					<div class="row"><span class="sw l-bk"></span>40 bKeepout</div>
					<div class="row"><span class="sw l-tr"></span>41 tRestrict</div>
					<div class="row"><span class="sw l-br"></span>42 bRestrict</div>
				</div>
				<div class="gutter"><div class="thumb th-layers"></div></div>
			</div>
			<div class="panelfoot"><button class="reset">Reset</button></div>
		</div>
		<div class="strip"></div>

		<div class="right">
			<div class="cmdrow">
				<div class="coords">50 mil (&#8211;150 2700)</div>
				<div class="cmdinput"><i class="arrow"></i></div>
			</div>
			<div class="viewrow">
				<div class="canvas">
					<svg class="pcb" width="1734" height="1380" viewBox="1198 340 1734 1380">
						<!-- board outline -->
						<path d="M1725 496H2897V1222H2510V1225H2115V1227H1725Z" fill="#000"/>
						<path d="M1725 1227V496H2897V1222H2510V1225H2115V1227H1725" fill="none" stroke="#c4a534" stroke-width="2"/>

						<!-- pin headers -->
						<g fill="#a6a6a6"><rect x="1386" y="670" width="46" height="94"/><rect x="1562" y="670" width="46" height="94"/><rect x="1664" y="670" width="46" height="94"/></g>
						<g fill="#a8c8b8">
							<rect x="1404" y="672" width="10" height="16"/><rect x="1404" y="708" width="10" height="16"/><rect x="1404" y="746" width="10" height="16"/>
							<rect x="1580" y="672" width="10" height="16"/><rect x="1580" y="708" width="10" height="16"/><rect x="1580" y="746" width="10" height="16"/>
							<rect x="1682" y="672" width="10" height="16"/><rect x="1682" y="708" width="10" height="16"/><rect x="1682" y="746" width="10" height="16"/>
						</g>
						<g fill="none" stroke="#b89a30" stroke-width="1.5"><circle cx="1477" cy="677" r="8.5"/><circle cx="1477" cy="757" r="8.5"/></g>
						<g fill="#3cb88a"><rect x="1480" y="692" width="22" height="12" rx="5"/><rect x="1480" y="710" width="22" height="12" rx="5"/><rect x="1480" y="728" width="22" height="12" rx="5"/></g>

						<!-- module -->
						<rect x="1454" y="822" width="122" height="214" fill="#a6a6a6"/>
						<g fill="#a51212"><use href="#modpads"/></g>
						<clipPath id="modclip"><rect x="1454" y="822" width="122" height="214"/></clipPath>
						<g clip-path="url(#modclip)" fill="#c62c2e"><use href="#modpads"/></g>

						<!-- pot -->
						<rect x="1487" y="1079" width="66" height="72" fill="none" stroke="#aaa" stroke-width="2"/>
						<circle cx="1521" cy="1109" r="18" fill="none" stroke="#c9a23c" stroke-width="2"/>
						<circle cx="1496" cy="1089" r="4.5" fill="none" stroke="#aaa" stroke-width="2.5"/>
						<g fill="#3cb88a"><circle cx="1567" cy="1089" r="5"/><circle cx="1567" cy="1105" r="5"/><circle cx="1567" cy="1119" r="5"/><circle cx="1567" cy="1133" r="5"/><circle cx="1473" cy="1097" r="5"/><circle cx="1473" cy="1111" r="5"/><circle cx="1473" cy="1127" r="5"/><circle cx="1473" cy="1141" r="5"/></g>

						<!-- switches -->
						<path d="M1235 1115H1303V1181H1283V1209H1255V1181H1235ZM1309 1115H1379V1181H1359V1209H1329V1181H1309Z" fill="none" stroke="#a81014" stroke-width="2"/>
						<path d="M1243 1115H1296V1179H1281V1207H1257V1179H1243ZM1317 1115H1369V1179H1357V1207H1331V1179H1317Z" fill="none" stroke="#b4b4b4" stroke-width="2"/>
						<g fill="#3cb88a"><path d="M1243 1117l8 10-8 10-8-10zM1294 1117l8 10-8 10-8-10zM1317 1117l8 10-8 10-8-10zM1369 1117l8 10-8 10-8-10z"/></g>
						<g fill="#282828" stroke="#3cb88a" stroke-width="4"><circle cx="1253" cy="1145" r="5"/><circle cx="1285" cy="1145" r="5"/><circle cx="1327" cy="1145" r="5"/><circle cx="1359" cy="1145" r="5"/></g>

						<!-- resistors -->
						<use href="#res" y="1257"/><use href="#res" y="1295"/><use href="#res" y="1331"/><use href="#res" y="1369"/><use href="#res" y="1405"/><use href="#res" y="1443"/><use href="#res" y="1481"/><use href="#res" y="1555"/>
						<path d="M1241 1498L1249 1493 1257 1498M1241 1520L1249 1525 1257 1520M1235 1503V1515" fill="none" stroke="#999" stroke-width="1.5"/>
						<g fill="#3cb88a"><circle cx="1241" cy="1509" r="6"/><circle cx="1259" cy="1509" r="6"/></g>

						<!-- silkscreen names, mirrored -->
						<g class="silk">
							<text transform="translate(1268 1245) scale(-1 1)">R1</text>
							<text transform="translate(1268 1283) scale(-1 1)">R2</text>
							<text transform="translate(1268 1319) scale(-1 1)">R3</text>
							<text transform="translate(1268 1357) scale(-1 1)">R4</text>
							<text transform="translate(1268 1393) scale(-1 1)">R5</text>
							<text transform="translate(1268 1431) scale(-1 1)">R6</text>
							<text transform="translate(1268 1469) scale(-1 1)">R7</text>
							<text transform="translate(1268 1543) scale(-1 1)">R8</text>
							<text transform="translate(1274 1509) scale(-1 1)">D1</text>
							<text transform="translate(1256 1111) scale(-1 1)">S2</text>
							<text transform="translate(1330 1111) scale(-1 1)">S1</text>
							<text class="tiny" transform="translate(1304 1222) scale(-1 1)">+1825027-1</text>
							<text class="tiny" transform="translate(1380 1222) scale(-1 1)">+1825027-1</text>
							<text transform="translate(1522 676) rotate(90)">U1 3V3 R4</text>
							<text transform="translate(1448 738) rotate(90)">+P1</text>
							<text transform="translate(1428 985) rotate(90)">ESP-32</text>
						</g>

						<!-- airwires -->
						<path class="air" d="M1409 680L1477 757L1577 870M1404 717H1694M1583 680L1580 783L1577 872M1687 680L1587 873M1409 717L1440 867L1468 1017M1492 699L1453 823L1395 1000L1327 1145M1492 735L1465 823L1405 1050L1359 1145M1490 722L1440 880L1372 1100L1320 1257M1488 735L1452 880L1360 1160L1316 1295M1447 875L1390 1040L1316 1331M1448 915L1355 1130L1300 1200L1243 1369M1448 935L1300 1200M1450 955L1285 1145M1450 975L1253 1145M1450 920L1369 1127M1449 950L1340 1170L1246 1331M1450 985L1294 1240L1245 1405M1449 1000L1300 1230L1245 1443M1387 1023L1253 1145M1470 1037L1379 1127M1453 1033L1380 1110M1243 1127H1369M1253 1145H1359M1253 1145L1247 1257M1285 1145L1282 1200L1270 1300M1246 1257L1243 1405L1241 1481M1245 1330L1241 1555M1270 1200L1250 1370M1300 1215L1246 1295M1320 1180L1245 1369M1338 1180L1260 1330M1450 960L1370 1160L1270 1370M1490 1046L1316 1369M1498 1046L1316 1405M1485 1046L1473 1097M1495 1046L1473 1111M1500 1046L1473 1127M1563 893L1453 1033M1563 903L1487 1043M1566 905L1497 1045M1497 1047L1567 1105M1575 1007L1567 1087M1567 1089V1119M1567 1133L1316 1443M1316 1443V1481M1316 1443L1259 1509M1241 1509L1316 1555M1241 1509H1259M1241 1481V1555"/>
						<path class="cross" d="M1444 1033H1468M1456 1026V1040M1270 1145H1320M1269 1136V1154M1347 1136V1154M1332 1145H1355M1511 1109H1531M1521 1099V1119"/>

						<!-- cursor crosshair -->
						<path class="cur-w" d="M1704 1229H1746M1725 1208V1250"/>
						<path class="cur-b" d="M1704 1229H1746M1725 1208V1250"/>
					</svg>
					<div class="sidetabs">
						<div class="stab">
							<svg width="34" height="34" viewBox="0 0 34 34"><rect width="34" height="34" fill="#2b8a4e"/><rect x="9" y="7" width="13" height="20" fill="#fff" stroke="#ffe100" stroke-width="2"/><path d="M5 11H9M5 17H9M5 23H9M22 11H26M22 17H26M22 23H26" stroke="#ffe100" stroke-width="2"/><path d="M27 8H32M27 12H32" stroke="#cfe8d8"/></svg>
							<span>MANUFACTURING</span>
						</div>
						<div class="stab">
							<svg width="34" height="34" viewBox="0 0 34 34"><rect width="34" height="34" rx="3" fill="#f5a623"/><path d="M9 7H24V12H15V16H22V21H15V27H9Z" fill="#555"/><path d="M15 9H26V13H19V18H25V21H19V28H15Z" fill="#aaa"/></svg>
							<span class="st-360">FUSION 360</span>
						</div>
						<div class="stab">
							<svg width="34" height="34" viewBox="0 0 34 34"><rect width="34" height="34" rx="3" fill="#f5a623"/><path d="M9 7H24V12H15V16H22V21H15V27H9Z" fill="#555"/><path d="M15 9H26V13H19V18H25V21H19V28H15Z" fill="#aaa"/></svg>
							<span class="st-team">FUSION TEAM</span>
						</div>
					</div>
				</div>
				<div class="vbar"><div class="vthumb"></div></div>
			</div>
			<div class="hbar"></div>
		</div>
	</div>

	<div class="status">
		<span class="msg">Left&#8211;click to select object to move</span>
		<svg class="bolt" width="40" height="40" viewBox="0 0 40 40"><path d="M0 19L29 0 21 18 40 20 10 40 18 22Z" fill="#10ab50"/></svg>
		<svg class="warn" width="40" height="40" viewBox="0 0 40 40"><circle cx="20" cy="20" r="20" fill="#666"/><path d="M18 6H22L21 25H19Z" fill="#fff"/><circle cx="20" cy="31" r="3" fill="#fff"/></svg>
	</div>
</div>
</body>
</html>
```
FILE: styles.css
```css
html, body {
	margin: 0;
	height: 1950px;
	overflow: hidden;
	background: #fff;
}
* {
	box-sizing: border-box;
}
.defs {
	position: absolute;
}
.svgtxt {
	font-family: "Liberation Sans", sans-serif;
}
.svgbold {
	font-family: "Liberation Sans", sans-serif;
	font-weight: 700;
}

.window {
	width: 2852px;
	height: 1727px;
	margin: 75px 0 0 112px;
	display: flex;
	flex-direction: column;
	background: #eee;
	border-radius: 12px;
	box-shadow: 0 44px 90px rgba(0,0,0,.42), 0 0 2px rgba(0,0,0,.45);
	font-family: "Noto Sans", sans-serif;
	color: #3a3a3a;
	overflow: hidden;
	font-size: 24px;
}

.titlebar {
	height: 45px;
	flex: none;
	display: flex;
	align-items: center;
	background: linear-gradient(#ebebeb, #d3d3d3);
	border-bottom: 1px solid #b5b5b5;
	position: relative;
	padding-left: 16px;
}
.light {
	width: 24px;
	height: 24px;
	border-radius: 50%;
	margin-right: 16px;
}
.red { background: #fc5b57; }
.yellow { background: #fdbb40; }
.green { background: #33c748; }
.title {
	position: absolute;
	left: 820px;
	top: 6px;
	display: flex;
	align-items: center;
	white-space: nowrap;
	font-size: 26px;
	letter-spacing: .045px;
	color: #444;
	line-height: 34px;
}
.titleicon {
	margin-right: 10px;
}

.toolbar {
	flex: none;
	display: flex;
	align-items: stretch;
}
.toolbar.top {
	height: 73px;
	padding-left: 12px;
	background: #d9d9d9;
	border-bottom: 3px solid #a3a3a3;
}
.toolbar.second {
	height: 79px;
	padding: 3px 0 0 12px;
	border-bottom: 2px solid #ddd;
	align-items: center;
}
.grip {
	width: 9px;
	height: 60px;
	align-self: center;
	flex: none;
	border-left: 2px solid #c6c6c6;
	border-right: 2px solid #c6c6c6;
}
.group {
	display: flex;
	border-right: 1px solid #bbb;
	height: 70px;
	flex: none;
}
.g1 { padding: 0 6px 0 6px; }
.g2 { padding: 0 6px 0 3px; }
.g3 { padding: 0 5px 0 3px; }
.g4 { padding: 0 5px 0 4px; }
.g5 { padding: 0 5px 0 4px; }
.g6 { padding: 0 5px 0 4px; }
.g7 { padding: 0 6px 0 4px; }
.g8 { padding: 0 6px 0 3px; }
.g9 { width: 11px; }
.tool {
	width: 78px;
	height: 70px;
	padding-top: 3px;
	flex: none;
	display: flex;
	align-items: center;
	justify-content: center;
	position: relative;
}
.tool.help {
	margin-left: 2px;
}
.ic {
	width: 40px;
	height: 40px;
	display: block;
	overflow: visible;
}
.drop::after {
	content: "";
	position: absolute;
	right: 8px;
	bottom: 6px;
	border: 5.5px solid transparent;
	border-top: 9px solid #666;
	border-bottom: 0;
}
.g-right {
	margin-left: 10px;
}
.linkitem {
	display: flex;
	align-items: center;
	font-size: 17px;
	line-height: 15px;
	color: #444;
	height: 70px;
	letter-spacing: .2px;
}
.linkitem span {
	display: block;
}
.li-design { margin-left: 29px; }
.li-design .linkicon { margin-right: 3px; }
.li-pcb { margin-left: 38px; }
.li-pcb .linkicon { margin-right: 12px; }

.tool2 {
	width: 74px;
	height: 62px;
	flex: none;
	display: flex;
	align-items: center;
	justify-content: center;
	position: relative;
}
.sel {
	width: 62px;
	height: 62px;
	display: flex;
	align-items: center;
	justify-content: center;
	background: #d9d9d9;
	border-radius: 6px;
}
.toolbar.second .grip {
	margin-right: 6px;
}
.sep2 {
	width: 1px;
	height: 70px;
	flex: none;
	background: #ccc;
	margin-left: 5px;
}
.s-b { margin-left: 10px; margin-right: 4px; }
.s-c { margin-left: 5px; margin-right: 5px; }
.s-d { margin-left: 5px; margin-right: 4px; }
.lbl {
	font-size: 26px;
	flex: none;
}
.lbl-layer { margin-left: 17px; width: 84px; }
.lbl-angle { margin-left: 16px; width: 91px; font-size: 27px; }
.select {
	height: 51px;
	flex: none;
	background: #fff;
	border: 2px solid #999;
	display: flex;
	align-items: center;
	position: relative;
	font-size: 28px;
}
.select.layer { width: 403px; }
.select.angle { width: 108px; }
.swatch-top {
	width: 40px;
	height: 40px;
	margin-left: 7px;
	background: #9f0608;
	border: 2px solid #c92a2e;
}
.select.layer .val { margin-left: 14px; }
.select.angle .val { margin-left: 10px; margin-top: -6px; }
.arrow {
	position: absolute;
	right: 11px;
	top: 50%;
	margin-top: -6px;
	border: 6px solid transparent;
	border-top: 11px solid #666;
	border-bottom: 0;
}

.main {
	flex: none;
	height: 1480px;
	display: flex;
}
.toolbox {
	width: 138px;
	flex: none;
	border-right: 2px solid #aaa;
	display: flex;
	flex-direction: column;
}
.tgroup {
	border-bottom: 2px solid #ddd;
	padding: 5px 0 5px 1px;
	flex: none;
}
.tgroup.g-route {
	padding: 7px 0 3px 1px;
}
.tgroup.g-add {
	padding: 7px 0 3px 1px;
}
.tgroup.first {
	padding-top: 0;
	height: 165px;
}
.tgrip {
	height: 10px;
	width: 104px;
	margin: 13px 0 4px 16px;
	border-top: 2px solid #ccc;
	border-bottom: 2px solid #ccc;
}
.tgrid {
	display: grid;
	grid-template-columns: 66px 66px;
	grid-auto-rows: 66px;
}
.tcell {
	display: flex;
	align-items: center;
	justify-content: center;
	position: relative;
}
.tcell.active::before {
	content: "";
	position: absolute;
	inset: 4px 4px 4px 4px;
	background: #d9d9d9;
	border-radius: 6px;
}
.tcell.active .ic {
	position: relative;
}
.tcell.drop::after {
	right: -1px;
	bottom: 4px;
}
.chev {
	flex: 1;
	display: flex;
	align-items: flex-end;
	justify-content: center;
	padding: 0 0 18px 0;
	margin-left: 2px;
}

.panel {
	width: 940px;
	flex: none;
	display: flex;
	flex-direction: column;
}
.tabs {
	height: 62px;
	flex: none;
	display: flex;
	align-items: flex-start;
	padding-left: 2px;
}
.tab {
	height: 59px;
	display: flex;
	align-items: center;
	justify-content: center;
	background: #d9d9d9;
	color: #777;
	font-size: 24px;
	padding-bottom: 3px;
	border-radius: 4px 4px 0 0;
}
.t-dm { width: 236px; margin-right: 8px; }
.t-in { width: 150px; margin-right: 8px; }
.tab.current {
	width: 218px;
	height: 62px;
	background: none;
	color: #0a96d9;
	font-size: 25px;
	border-bottom: 6px solid #0a96d9;
	padding: 0;
}
.tabfill {
	flex: 1;
	height: 22px;
	margin: 40px 4px 0 4px;
	background: #e6e6e6;
	border-radius: 0 8px 0 0;
}
.heading {
	flex: none;
	font-size: 26px;
	display: flex;
	align-items: center;
}
.h-types { height: 49px; padding-bottom: 18px; }
.h-layers { height: 47px; padding-bottom: 16px; }

.list {
	flex: none;
	width: 936px;
	border: 1px solid #aaa;
	border-left-width: 2px;
	background: #eee;
	display: flex;
	overflow: hidden;
}
.list.types { height: 416px; }
.list.layers { height: 612px; }
.rows {
	width: 902px;
	flex: none;
	background: #0a96d9;
	color: #fff;
}
.row {
	height: 40px;
	display: flex;
	align-items: center;
	font-size: 24.5px;
	line-height: 40px;
}
.types .row {
	font-size: 24px;
}
.ti {
	width: 32px;
	height: 32px;
	flex: none;
	margin: 0 13px 0 10px;
}
.gutter {
	flex: 1;
	padding-left: 9px;
}
.thumb {
	width: 12px;
	background: #888;
	border-radius: 6px;
}
.th-types { height: 307px; }
.th-layers { height: 188px; }
.handle {
	flex: none;
	height: 16px;
	display: flex;
	align-items: center;
	justify-content: center;
	padding-right: 2px;
	padding-left: 0;
}
.handle.h2 { height: 17px; }
.handle i {
	width: 12px;
	height: 12px;
	border-radius: 50%;
	background: #b4b4b4;
}
.presets {
	flex: none;
	width: 936px;
	height: 202px;
	background: #fff;
	border: 1px solid #aaa;
	padding-top: 1px;
	font-size: 25px;
	border-width: 1px 1px 2px 2px;
}
.presets div {
	height: 34px;
	line-height: 34px;
	padding-left: 12px;
}
.presets div:nth-child(even) {
	background: #f5f5f5;
}
.sw {
	width: 32px;
	height: 32px;
	flex: none;
	margin: 0 13px 0 10px;
	border: 2px solid;
}
.l-top { background: #a84b56; border-color: #b5404e; }
.l-bot { background: #3d8ac4; border-color: #3f97d4; }
.l-pad { background: #5ab89f; border-color: #4cc8a0; }
.l-unr { background: #a8b56e; border-color: #bcc86a; }
.l-dim { background: #b8b074; border-color: #cfbc6c; }
.l-gry { background: #a8b0bc; border-color: #b8bfca; }
.l-tk, .l-tr {
	background: #2f3b4b radial-gradient(#c04a5a 1px, transparent 1.2px) 0 0 / 6px 7px;
	border-color: #b34b5f;
}
.l-bk, .l-br {
	background: #2f3b4b radial-gradient(#3d9ad0 1px, transparent 1.2px) 0 0 / 6px 7px;
	border-color: #3d8fc9;
}
.panelfoot {
	flex: 1;
	display: flex;
	justify-content: flex-end;
	align-items: flex-start;
	padding: 5px 3px 0 0;
	border-bottom: 1px solid #bbb;
}
.reset {
	width: 104px;
	height: 51px;
	background: #fff;
	border: 2px solid #888;
	border-radius: 8px;
	font-family: "Noto Sans", sans-serif;
	font-size: 25px;
	color: #3a3a3a;
	padding: 0;
}
.strip {
	width: 8px;
	flex: none;
	background: #dedede;
}

.right {
	flex: 1;
	display: flex;
	flex-direction: column;
	min-width: 0;
}
.cmdrow {
	flex: none;
	height: 68px;
	display: flex;
	align-items: center;
}
.coords {
	width: 324px;
	padding-left: 17px;
	font-size: 28.5px;
	flex: none;
}
.cmdinput {
	width: 1434px;
	height: 52px;
	background: #fff;
	border: 3px solid #0a96d9;
	position: relative;
	flex: none;
}
.cmdinput .arrow {
	right: 11px;
	margin-top: -2px;
	border-width: 5px;
	border-top-width: 7px;
	border-bottom-width: 0;
}
.viewrow {
	flex: none;
	height: 1380px;
	display: flex;
}
.canvas {
	width: 1734px;
	height: 1380px;
	background: #292929;
	position: relative;
	flex: none;
	overflow: hidden;
}
.pcb {
	display: block;
}
.air {
	fill: none;
	stroke: #aeac2c;
	stroke-width: 1.5;
}
.cross {
	fill: none;
	stroke: #aeac2c;
	stroke-width: 1.5;
}
.silk {
	font-family: "DejaVu Sans Mono", monospace;
	font-size: 12px;
	fill: #a8a8a8;
}
.silk .tiny {
	font-size: 10px;
}
.cur-w {
	fill: none;
	stroke: #fff;
	stroke-width: 2;
}
.cur-b {
	fill: none;
	stroke: #000;
	stroke-width: 2;
	stroke-dasharray: 2 4;
}
.sidetabs {
	position: absolute;
	top: 4px;
	right: 4px;
	width: 58px;
	display: flex;
	flex-direction: column;
	gap: 15px;
}
.stab {
	height: 315px;
	background: #454545;
	border-right: 4px solid #3a3a3a;
	display: flex;
	flex-direction: column;
	align-items: center;
	padding: 17px 0 0 4px;
	color: #f0f0f0;
	font-size: 26px;
}
.stab svg {
	flex: none;
	display: block;
}
.stab span {
	writing-mode: vertical-rl;
	margin-top: 16px;
	line-height: 30px;
	white-space: nowrap;
}
.stab span.st-360 { letter-spacing: .6px; margin-top: 21px; }
.stab span.st-team { letter-spacing: -.8px; margin-top: 25px; }
.stab:nth-child(2) svg, .stab:nth-child(3) svg {
	margin-top: 24px;
	margin-bottom: 0;
}
.vbar {
	flex: none;
	width: 32px;
	padding-left: 10px;
}
.vthumb {
	width: 12px;
	height: 1380px;
	background: #808080;
	border-radius: 6px;
}
.hbar {
	margin: 10px 0 0 0;
	width: 1734px;
	height: 12px;
	background: #808080;
	border-radius: 6px;
	flex: none;
}

.status {
	flex: 1;
	display: flex;
	align-items: center;
	padding-left: 12px;
	border-top: 2px solid #8a8a8a;
	font-size: 27.4px;
}
.msg {
	flex: 1;
}
.bolt {
	margin-right: 12px;
}
.warn {
	margin-right: 22px;
}
```
